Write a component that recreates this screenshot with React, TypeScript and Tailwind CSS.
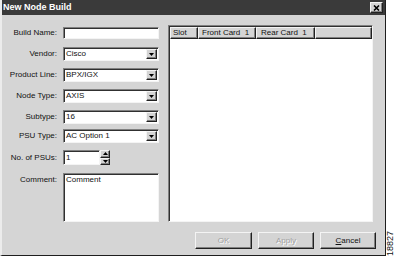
import React from 'react';

const sunken = 'bg-white border border-t-[#808080] border-l-[#808080] border-b-[#f4f4f4] border-r-[#f4f4f4] shadow-[inset_1px_1px_0_#303030]';
const raised = 'bg-[#d4d4d4] border border-t-[#f4f4f4] border-l-[#f4f4f4] border-b-[#202020] border-r-[#202020] shadow-[inset_-1px_-1px_0_#808080]';

function Arrow({ up = false }: { up?: boolean }) {
  return (
    <svg width="5" height="3" viewBox="0 0 5 3" className={up ? 'rotate-180' : ''}>
      <path d="M0 0h5L2.5 3z" fill="#000" />
    </svg>
  );
}

function Select({ value }: { value: string }) {
  return (
    <div className={`${sunken} w-[96px] h-[14px] flex items-center justify-between pl-[2px] pr-[1px]`}>
      <span className="leading-none">{value}</span>
      <div className={`${raised} w-[11px] h-[10px] flex items-center justify-center`}>
        <Arrow />
      </div>
    </div>
  );
}

function Row({ label, mt, children }: { label: string; mt: string; children: React.ReactNode }) {
  return (
    <div className={`flex items-center ${mt}`}>
      <div className="w-[55px] text-right leading-none">{label}</div>
      <div className="ml-[6px]">{children}</div>
    </div>
  );
}

export default function App() {
  return (
    <div className="w-[395px] h-[258px] bg-white flex overflow-hidden text-[8px] text-[#111] font-['Liberation_Sans',Arial,sans-serif]">
      <div className="w-[386px] h-[256px] bg-[#d5d5d5] border-l-2 border-l-[#ececec] border-r border-r-[#1e1e1e] border-b border-b-[#1e1e1e] flex flex-col">
        <div className="h-[15px] bg-[#3a3a3a] flex items-center justify-between pl-[1px] pr-[2px]">
          <span className="text-white font-bold text-[9px] leading-none">New Node Build</span>
          <div className={`${raised} w-[13px] h-[11px] flex items-center justify-center`}>
            <svg width="7" height="6" viewBox="0 0 7 6">
              <path d="M1 0.5l5 5M6 0.5l-5 5" stroke="#000" strokeWidth="1.6" />
            </svg>
          </div>
        </div>

        <div className="flex pt-[10px]">
          <div className="w-[157px] flex flex-col pt-[2px]">
            <Row label="Build Name:" mt="mt-0">
              <div className={`${sunken} w-[96px] h-[12px]`} />
            </Row>
            <Row label="Vendor:" mt="mt-[8px]">
              <Select value="Cisco" />
            </Row>
            <Row label="Product Line:" mt="mt-[7px]">
              <Select value="BPX/IGX" />
            </Row>
            <Row label="Node Type:" mt="mt-[7px]">
              <Select value="AXIS" />
            </Row>
            <Row label="Subtype:" mt="mt-[7px]">
              <Select value="16" />
            </Row>
            <Row label="PSU Type:" mt="mt-[5px]">
              <Select value="AC Option 1" />
            </Row>
            <Row label="No. of PSUs:" mt="mt-[7px]">
              <div className="flex">
                <div className={`${sunken} w-[37px] h-[15px] flex items-center pl-[2px]`}>
                  <span className="leading-none">1</span>
                </div>
                <div className="flex flex-col w-[10px] h-[15px]">
                  <div className={`${raised} flex-1 flex items-center justify-center`}>
                    <Arrow up />
                  </div>
                  <div className={`${raised} flex-1 flex items-center justify-center`}>
                    <Arrow />
                  </div>
                </div>
              </div>
            </Row>
            <div className="flex mt-[8px]">
              <div className="w-[55px] text-right leading-none pt-[3px]">Comment:</div>
              <div className={`${sunken} ml-[6px] w-[96px] h-[49px] pl-[2px] pt-[2px] leading-none`}>Comment</div>
            </div>
          </div>

          <div className={`${sunken} ml-[9px] w-[205px] h-[197px] flex flex-col`}>
            <div className="flex h-[13px] pl-[1px] pt-[1px]">
              <div className={`${raised} w-[28px] flex items-center pl-[2px] leading-none`}>Slot</div>
              <div className={`${raised} w-[58px] flex items-center pl-[3px] leading-none`}>Front Card&nbsp;&nbsp;1</div>
              <div className={`${raised} w-[59px] flex items-center pl-[4px] leading-none`}>Rear Card&nbsp;&nbsp;1</div>
              <div className={`${raised} flex-1`} />
            </div>
          </div>
        </div>

        <div className="flex justify-end gap-[6px] pr-[9px] mt-[10px]">
          <div className={`${raised} w-[57px] h-[17px] flex items-center justify-center text-[#a0a0a0] [text-shadow:1px_1px_0_#fff]`}>OK</div>
          <div className={`${raised} w-[56px] h-[17px] flex items-center justify-center text-[#a0a0a0] [text-shadow:1px_1px_0_#fff]`}>Apply</div>
          <div className={`${raised} w-[56px] h-[17px] flex items-center justify-center`}>
            <span><span className="underline">C</span>ancel</span>
          </div>
        </div>
      </div>
      <div className="flex-1 flex items-end justify-end pb-[2px]">
        <span className="[writing-mode:vertical-rl] rotate-180 text-[9px] leading-none">18827</span>
      </div>
    </div>
  );
}
